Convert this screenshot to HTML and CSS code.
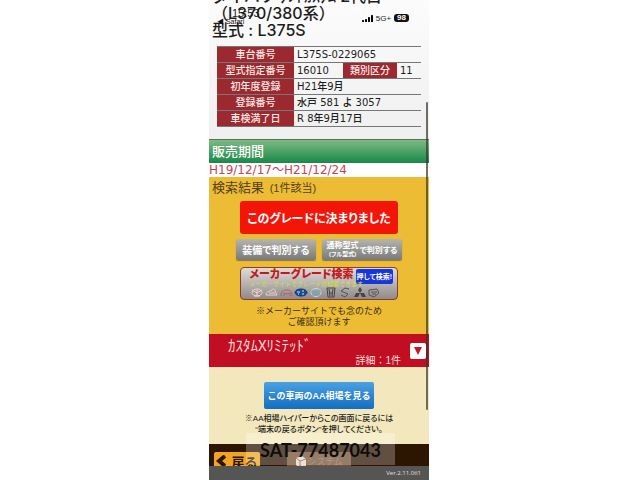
FILE: index.html
```html
<!DOCTYPE html>
<html lang="ja">
<head>
    <meta charset="utf-8">
    <title>検索結果</title>
    <link rel="stylesheet" href="styles.css">
</head>
<body>
    <div class="phone">
        <div class="status">
            <div class="status-left">
                <span class="clock">15:53</span>
                <a class="safari" href="#">◀ Safari</a>
            </div>
            <div class="status-right">
                <svg class="signal" viewBox="0 0 11 7" width="11" height="7">
                    <rect x="0" y="5" width="2" height="2" rx="0.5"/>
                    <rect x="3" y="4" width="2" height="3" rx="0.5"/>
                    <rect x="6" y="2" width="2" height="5" rx="0.5"/>
                    <rect x="9" y="0" width="2" height="7" rx="0.5"/>
                </svg>
                <span>5G+</span>
                <span class="battery">98</span>
            </div>
        </div>
        <div class="car">
            <h1>ダイハツ ﾀﾝﾄｶｽﾀﾑ 2代目<br>（L370/380系）<br>型式 : L375S</h1>
            <table class="spec">
                <tr><th>車台番号</th><td colspan="3">L375S-0229065</td></tr>
                <tr><th>型式指定番号</th><td class="number">16010</td><th class="kind">類別区分</th><td>11</td></tr>
                <tr><th>初年度登録</th><td colspan="3">H21年9月</td></tr>
                <tr><th>登録番号</th><td colspan="3">水戸 581 よ 3057</td></tr>
                <tr><th>車検満了日</th><td colspan="3">R 8年9月17日</td></tr>
            </table>
        </div>
        <h2 class="period">販売期間</h2>
        <p class="dates">H19/12/17〜H21/12/24</p>
        <div class="result">
            <h2>検索結果 <small>(1件該当)</small></h2>
            <button class="decided">このグレードに決まりました</button>
            <div class="choices">
                <button>装備で判別する</button>
                <button class="model"><span class="stack"><span>通称型式</span><span class="full">(フル型式)</span></span><span class="by">で判別する</span></button>
            </div>
            <button class="maker">
                <span class="maker-top"><span class="maker-title">メーカーグレード検索</span><span class="push">押して検索!</span></span>
                <span class="maker-sub">メーカーサイトでグレードが検索できます</span>
                <svg class="logos" viewBox="0 0 130 11" width="130" height="11" fill="none" stroke-width="1">
                    <g stroke="#f5d2cf">
                        <ellipse cx="7" cy="5.500" rx="5" ry="3.500"/>
                        <path d="M2 3l5 3 5-3M7 3v6M4 9h6"/>
                    </g>
                    <g stroke="#eecdca">
                        <path d="M16 8c0-4 3-3 6-5 1-2 3-1 3 1l2 4zM19 6h6"/>
                    </g>
                    <g stroke="#b95f60">
                        <path d="M31 9c0-4 2-6 6-6s5 2 5 6M34 9V6l3 1 3-1v3"/>
                    </g>
                    <ellipse cx="51" cy="5.500" rx="6" ry="3.500" fill="#174b9b" stroke="#163463"/>
                    <path d="M47 5h3M52 4h2M52 7h2M48 7h1" stroke="#dfe9f5"/>
                    <g stroke="#b9dced">
                        <ellipse cx="66" cy="5.500" rx="5" ry="4"/>
                        <path d="M61 5c2-3 3 2 5 0s3-2 5 0M62 8h8" stroke="#5cabd0"/>
                    </g>
                    <g stroke="#444">
                        <path d="M77 1h8l-1 9h-6zM79 2l1 7M83 2l-1 7M80 6h2"/>
                    </g>
                    <path d="M99 2l-4-1-4 3 7 3-3 3-4-2" stroke="#555"/>
                    <path d="M110 0l2 3-2 3-2-3zM110 6l-2 4h-4l2-4zM110 6h4l2 4h-4z" fill="#444"/>
                    <path d="M119 3l8-1 2 4-5 4-5-2zM121 5h6M122 7h4" stroke="#555"/>
                </svg>
            </button>
            <p class="note">※メーカーサイトでも念のため<br>ご確認頂けます</p>
        </div>
        <div class="grade">
            <div class="grade-name">ｶｽﾀﾑXﾘﾐﾃｯﾄﾞ</div>
            <div class="grade-count">詳細：1件</div>
            <button class="open" aria-label="詳細">
                <svg viewBox="0 0 10 10" width="10" height="10"><path d="M1 1h8l-4 8z" fill="#c91426"/></svg>
            </button>
        </div>
        <div class="market">
            <button class="price">この車両のAA相場を見る</button>
            <p>※AA相場ハイパーからこの画面に戻るには<br>“端末の戻るボタン”を押してください。</p>
        </div>
        <div class="nav">
            <button class="back"><svg viewBox="0 0 10 12" width="10" height="12" fill="none" stroke="#2b1600" stroke-width="4"><path d="M9 1L3 6l6 5"/></svg>戻る</button>
            <button class="system"><svg viewBox="0 0 12 13" width="12" height="13"><path d="M1 3l6-2 4 3v7l-6 2-4-3z" fill="#e5d5c8"/><path d="M1 3l4 3 6-2M5 6v7" fill="none" stroke="#806451"/></svg>システム</button>
        </div>
        <div class="version">Ver.2.11.061</div>
        <div class="scrollbar"></div>
        <div class="stamp">SAT-77487043</div>
    </div>
</body>
</html>
```

FILE: styles.css
```css
* {
    box-sizing: border-box;
}
body {
    margin: 0;
    padding-right: 2px;
    background: #fff;
    font-family: "Liberation Sans", "Noto Sans CJK JP", sans-serif;
    overflow: hidden;
}
.phone {
    position: relative;
    max-width: 220px;
    margin: 0 auto;
    overflow: hidden;
    color: #1c1c1c;
}
h1, h2, p {
    margin: 0;
}
button {
    padding: 0;
    border: none;
    font-family: inherit;
    white-space: nowrap;
}
svg {
    flex: none;
}
.status {
    position: absolute;
    top: 9px;
    left: 8px;
    right: 20px;
    display: flex;
    justify-content: space-between;
    font-size: 8px;
    line-height: 9px;
}
.status-left {
    display: flex;
    flex-direction: column;
}
.clock {
    padding-left: 15px;
    font-size: 11px;
}
.safari {
    color: #111;
    font-size: 7px;
    line-height: 8px;
    text-decoration: none;
}
.status-right {
    display: flex;
    align-items: center;
    gap: 3px;
    height: 18px;
}
.battery {
    padding: 0 3px;
    border-radius: 3px;
    background: #111;
    color: #fff;
    font-weight: bold;
    line-height: 8px;
}
.car {
    padding-bottom: 12px;
    border-bottom: 1px solid #55734f;
    background: linear-gradient(#fdfdfd, #efefef);
}
.spec, .dates {
    font-family: "DejaVu Sans", "Noto Sans CJK JP", sans-serif;
}
.car h1 {
    margin-top: -12px;
    padding-left: 3px;
    font-family: Inter, "Noto Sans CJK JP", sans-serif;
    font-size: 16px;
    font-weight: 500;
    line-height: 17px;
    white-space: nowrap;
}
.spec {
    width: 204px;
    margin: 7px 8px 0;
    border-collapse: collapse;
    font-size: 10px;
    font-weight: 500;
    line-height: 15px;
    white-space: nowrap;
}
.spec tr {
    border-top: 1px solid #777;
    border-bottom: 1px solid #777;
}
.spec th {
    width: 77px;
    padding: 0;
    background: #9b292f;
    color: #fbe9e6;
    font-weight: 500;
}
.spec th.kind {
    width: 54px;
}
.spec td {
    padding: 0 0 0 3px;
}
.spec .number {
    width: 49px;
}
.period {
    padding-left: 3px;
    background: linear-gradient(#7fba83, #17894a);
    color: #fff;
    font-size: 13px;
    font-weight: 500;
    line-height: 23px;
}
.dates {
    background: #fff;
    color: #c34555;
    font-size: 12px;
    line-height: 14px;
}
.result {
    display: flex;
    flex-direction: column;
    align-items: center;
    padding-bottom: 6px;
    background: #edbc35;
}
.result h2 {
    align-self: stretch;
    padding: 1px 0 3px 3px;
    color: #55401c;
    font-size: 13px;
    font-weight: normal;
    line-height: 19px;
}
.result small {
    margin-left: 2px;
    font-size: 11px;
}
.decided {
    width: 158px;
    height: 33px;
    border-radius: 3px;
    background: #f41509;
    color: #fff;
    font-size: 12px;
    font-weight: bold;
    font-feature-settings: "palt";
}
.choices {
    display: flex;
    gap: 6px;
    margin: 5px 0 7px;
}
.choices button {
    width: 80px;
    height: 21px;
    border-radius: 2px;
    background: linear-gradient(#b5b4ae, #797a78);
    box-shadow: 0 1px 1px #8b7440;
    color: #fff;
    font-size: 10px;
    font-weight: bold;
    font-feature-settings: "palt";
}
.choices .model {
    display: flex;
    align-items: center;
    justify-content: center;
    gap: 1px;
}
.stack {
    display: flex;
    flex-direction: column;
    font-size: 8px;
    line-height: 9px;
}
.full {
    font-size: 6px;
    line-height: 8px;
}
.by {
    font-size: 8px;
}
.maker {
    display: flex;
    flex-direction: column;
    align-items: center;
    width: 158px;
    height: 33px;
    border: 1px solid #8b3c2d;
    border-radius: 4px;
    background: linear-gradient(#dedbd9, #8e8b8a);
}
.maker-top {
    display: flex;
    align-items: flex-start;
    align-self: stretch;
    justify-content: flex-end;
    gap: 2px;
    height: 13px;
    padding: 0 4px 0 0;
}
.maker-title {
    color: #c5171c;
    font-size: 11px;
    font-weight: 900;
    font-feature-settings: "palt";
    line-height: 13px;
}
.push {
    flex: none;
    margin-top: 1px;
    padding: 0 1px;
    border-radius: 2px;
    background: #1735dc;
    color: #fff;
    font-size: 7px;
    font-weight: bold;
    font-feature-settings: "palt";
    line-height: 15px;
}
.maker-sub {
    align-self: flex-start;
    flex: none;
    height: 6px;
    padding-left: 8px;
    color: #d9e02a;
    font-size: 6px;
    line-height: 6px;
}
.logos {
    margin-right: 8px;
}
.note {
    padding-top: 6px;
    font-size: 9px;
    line-height: 11px;
    text-align: center;
    color: #3c2b10;
}
.grade {
    display: grid;
    grid-template-columns: 1fr 16px;
    column-gap: 9px;
    padding: 1px 3px 0 0;
    background: #c20e22;
    color: #f8dcd8;
}
.grade-name {
    padding-left: 19px;
    font-family: "Noto Sans CJK JP", sans-serif;
    font-size: 15px;
    line-height: 19px;
}
.grade-count {
    grid-row: 2;
    font-size: 10px;
    line-height: 13px;
    text-align: right;
}
.open {
    grid-column: 2;
    grid-row: 1 / 3;
    align-self: center;
    display: flex;
    align-items: center;
    justify-content: center;
    height: 16px;
    border-radius: 2px;
    background: #fff;
}
.market {
    padding: 15px 0 9px;
    background: #f3e8bd;
    text-align: center;
}
.price {
    display: block;
    width: 110px;
    height: 27px;
    margin: 0 auto 4px;
    border-radius: 2px;
    background: linear-gradient(#4aa1e3, #146dbf);
    color: #fff;
    font-size: 9px;
    font-weight: bold;
}
.market p {
    font-size: 8px;
    font-weight: 500;
    font-feature-settings: "palt";
    line-height: 11px;
    white-space: nowrap;
}
.nav {
    display: flex;
    align-items: flex-start;
    gap: 27px;
    height: 22px;
    padding: 8px 5px 0;
    background: #2c1602;
    overflow: hidden;
}
.nav button {
    display: flex;
    align-items: center;
    justify-content: center;
    height: 18px;
}
.back {
    gap: 5px;
    width: 46px;
    border-radius: 2px;
    background: #f2a522;
    color: #2b1600;
    font-size: 13px;
    font-weight: bold;
}
.system {
    width: 64px;
    background: #755234;
    color: #967768;
    font-size: 9px;
}
.version {
    padding-right: 8px;
    background: #555554;
    color: #e0e0e0;
    font-family: "Open Sans", sans-serif;
    font-size: 6px;
    line-height: 14px;
    text-align: right;
}
.scrollbar {
    position: absolute;
    top: 102px;
    right: 1px;
    width: 2px;
    height: 308px;
    border-radius: 1px;
    background: rgba(60, 50, 40, 0.7);
}
.stamp {
    position: absolute;
    left: 37px;
    right: 34px;
    bottom: 15px;
    padding-top: 2px;
    background: rgba(255, 255, 255, 0.25);
    color: #0c0c0c;
    font-family: Lato, sans-serif;
    font-size: 18px;
    font-weight: bold;
    line-height: 30px;
    text-align: center;
}
```
